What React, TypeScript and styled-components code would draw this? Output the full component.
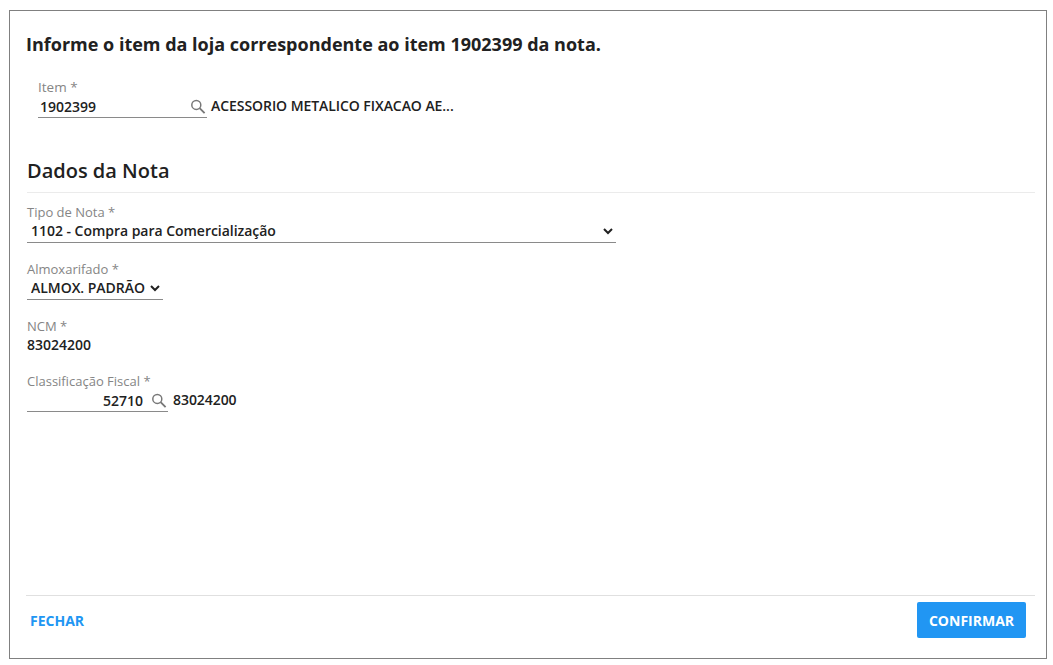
import styled, { createGlobalStyle } from "styled-components";

const GlobalStyle = createGlobalStyle`
  html, body {
    margin: 0;
    padding: 0;
    background: #ffffff;
    font-family: "Open Sans", sans-serif;
    color: #212121;
  }
`;

const Dialog = styled.div`
  box-sizing: border-box;
  width: 1038px;
  height: 649px;
  margin: 10px 0 0 9px;
  border: 1px solid #808080;
  padding: 0 11px 0 16px;
  display: flex;
  flex-direction: column;
`;

const Title = styled.h1`
  margin: 21px 0 0 0;
  font-size: 18px;
  line-height: 24px;
  font-weight: 700;
  color: #212121;
`;

const Label = styled.label<{ $size?: number }>`
  display: block;
  font-size: ${(p) => p.$size ?? 13}px;
  line-height: 16px;
  color: #858585;
`;

const ItemField = styled.div`
  margin: 23px 0 0 12px;
`;

const Row = styled.div<{ $top?: number; $gap: number }>`
  margin-top: ${(p) => p.$top ?? 0}px;
  display: flex;
  align-items: center;
  gap: ${(p) => p.$gap}px;
`;

const SearchBox = styled.div<{ $width: number }>`
  box-sizing: border-box;
  width: ${(p) => p.$width}px;
  height: 22px;
  padding-bottom: 1px;
  display: flex;
  align-items: center;
  border-bottom: 1px solid #8a8a8a;
`;

const TextInput = styled.input<{ $right?: boolean }>`
  flex: 1;
  min-width: 0;
  border: 0;
  outline: 0;
  padding: 0 0 0 2px;
  background: transparent;
  font-family: inherit;
  font-size: 14px;
  font-weight: 600;
  color: #212121;
  text-align: ${(p) => (p.$right ? "right" : "left")};
`;

const SearchIcon = styled.svg`
  flex: none;
  width: 20px;
  height: 20px;
  margin: 0 -1px 0 6px;
  fill: none;
  stroke: #787878;
`;

const Description = styled.span`
  margin-bottom: 3px;
  font-size: 14px;
  font-weight: 600;
  letter-spacing: -0.06px;
  color: #212121;
`;

const SectionTitle = styled.h2`
  margin: 39px 0 0 1px;
  padding-bottom: 8px;
  font-size: 20px;
  line-height: 27px;
  font-weight: 600;
  color: #212121;
  border-bottom: 1px solid #ebebeb;
`;

const Field = styled.div<{ $top: number }>`
  margin: ${(p) => p.$top}px 0 0 1px;
`;

const Select = styled.select<{ $width: number }>`
  display: block;
  box-sizing: border-box;
  width: ${(p) => p.$width}px;
  height: 23px;
  border: 0;
  border-bottom: 1px solid #8a8a8a;
  border-radius: 0;
  outline: 0;
  padding: 0 0 1px 0;
  background: #ffffff;
  font-family: inherit;
  font-size: 14px;
  font-weight: 600;
  letter-spacing: -0.03px;
  color: #212121;
`;

const Value = styled.div`
  margin-top: 1px;
  font-size: 14px;
  line-height: 20px;
  font-weight: 600;
  color: #212121;
`;

const Footer = styled.div`
  margin-top: auto;
  height: 63px;
  box-sizing: border-box;
  border-top: 1px solid #e0e0e0;
  padding: 6px 9px 0 0;
  display: flex;
  justify-content: space-between;
  align-items: flex-start;
`;

const TextButton = styled.button`
  height: 36px;
  border: 0;
  padding: 0 4px;
  background: transparent;
  font-family: inherit;
  font-size: 14px;
  font-weight: 700;
  color: #2196f3;
`;

const PrimaryButton = styled.button`
  height: 36px;
  width: 109px;
  border: 0;
  border-radius: 2px;
  padding: 0;
  background: #2196f3;
  font-family: inherit;
  font-size: 14px;
  font-weight: 700;
  color: #ffffff;
`;

const Magnifier = () => (
  <SearchIcon viewBox="0 0 20 20">
    <circle cx="8.3" cy="8.9" r="4.5" strokeWidth="1.5" />
    <path d="M11.6 12.2L16.6 17.2" strokeWidth="1.9" />
  </SearchIcon>
);

export default function App() {
  return (
    <>
      <GlobalStyle />
      <Dialog>
        <Title>Informe o item da loja correspondente ao item 1902399 da nota.</Title>

        <ItemField>
          <Label $size={13.5}>Item *</Label>
          <Row $top={1} $gap={4}>
            <SearchBox $width={169}>
              <TextInput defaultValue="1902399" />
              <Magnifier />
            </SearchBox>
            <Description>ACESSORIO METALICO FIXACAO AE...</Description>
          </Row>
        </ItemField>

        <SectionTitle>Dados da Nota</SectionTitle>

        <Field $top={11}>
          <Label>Tipo de Nota *</Label>
          <Select $width={589} defaultValue="1102">
            <option value="1102">1102 - Compra para Comercialização</option>
          </Select>
        </Field>

        <Field $top={18}>
          <Label>Almoxarifado *</Label>
          <Select $width={136} defaultValue="padrao">
            <option value="padrao">ALMOX. PADRÃO</option>
          </Select>
        </Field>

        <Field $top={18}>
          <Label>NCM *</Label>
          <Value>83024200</Value>
        </Field>

        <Field $top={18}>
          <Label>Classificação Fiscal *</Label>
          <Row $top={1} $gap={5}>
            <SearchBox $width={141}>
              <TextInput $right defaultValue="52710" />
              <Magnifier />
            </SearchBox>
            <Description>83024200</Description>
          </Row>
        </Field>

        <Footer>
          <TextButton>FECHAR</TextButton>
          <PrimaryButton>CONFIRMAR</PrimaryButton>
        </Footer>
      </Dialog>
    </>
  );
}
